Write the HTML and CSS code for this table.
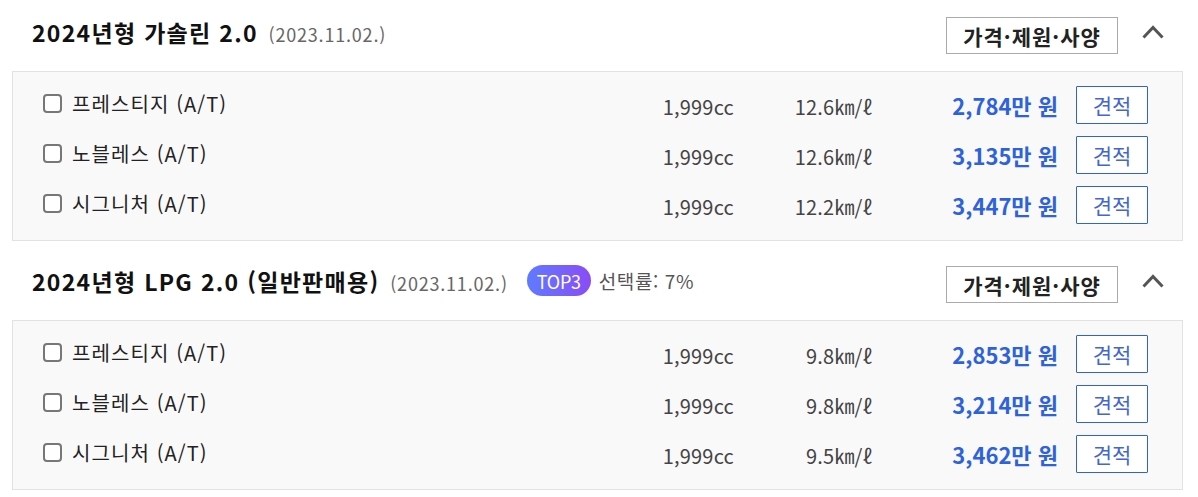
FILE: index.html
```html
<!DOCTYPE html>
<html lang="ko">
<head>
<meta charset="utf-8">
<link rel="stylesheet" href="styles.css">
</head>
<body>
<div class="wrap">
  <section class="trim">
    <div class="trim-head">
      <h2 class="title">2024년형 가솔린 2.0 <span class="date">(2023.11.02.)</span></h2>
      <div class="head-right">
        <button class="spec-btn">가격·제원·사양</button>
        <span class="chev"><svg width="22" height="14" viewBox="0 0 22 14"><path d="M1.5 12.5 L11 2.5 L20.5 12.5" fill="none" stroke="#555" stroke-width="3"/></svg></span>
      </div>
    </div>
    <div class="panel">
      <div class="row"><label class="name"><span class="cb"></span>프레스티지 (A/T)</label><span class="cc">1,999cc</span><span class="fuel">12.6㎞/ℓ</span><span class="price"><b>2,784</b>만 원</span><button class="est">견적</button></div>
      <div class="row"><label class="name"><span class="cb"></span>노블레스 (A/T)</label><span class="cc">1,999cc</span><span class="fuel">12.6㎞/ℓ</span><span class="price"><b>3,135</b>만 원</span><button class="est">견적</button></div>
      <div class="row"><label class="name"><span class="cb"></span>시그니처 (A/T)</label><span class="cc">1,999cc</span><span class="fuel">12.2㎞/ℓ</span><span class="price"><b>3,447</b>만 원</span><button class="est">견적</button></div>
    </div>
  </section>
  <section class="trim">
    <div class="trim-head">
      <h2 class="title">2024년형 LPG 2.0 (일반판매용) <span class="date">(2023.11.02.)</span></h2>
      <span class="badge">TOP3</span><span class="rate">선택률: 7%</span>
      <div class="head-right">
        <button class="spec-btn">가격·제원·사양</button>
        <span class="chev"><svg width="22" height="14" viewBox="0 0 22 14"><path d="M1.5 12.5 L11 2.5 L20.5 12.5" fill="none" stroke="#555" stroke-width="3"/></svg></span>
      </div>
    </div>
    <div class="panel">
      <div class="row"><label class="name"><span class="cb"></span>프레스티지 (A/T)</label><span class="cc">1,999cc</span><span class="fuel">9.8㎞/ℓ</span><span class="price"><b>2,853</b>만 원</span><button class="est">견적</button></div>
      <div class="row"><label class="name"><span class="cb"></span>노블레스 (A/T)</label><span class="cc">1,999cc</span><span class="fuel">9.8㎞/ℓ</span><span class="price"><b>3,214</b>만 원</span><button class="est">견적</button></div>
      <div class="row"><label class="name"><span class="cb"></span>시그니처 (A/T)</label><span class="cc">1,999cc</span><span class="fuel">9.5㎞/ℓ</span><span class="price"><b>3,462</b>만 원</span><button class="est">견적</button></div>
    </div>
  </section>
</div>
</body>
</html>
```
FILE: styles.css
```css
* { box-sizing: border-box; }
html, body { margin: 0; padding: 0; background: #fff; }
body { font-family: "Noto Sans CJK KR", "Noto Sans", sans-serif; color: #222; }
.wrap { width: 1171px; margin-left: 12px; }
.trim + .trim { margin-top: 8px; }
.trim-head { display: flex; align-items: center; height: 71px; padding: 0 0 8px 20px; }
.title { margin: 0; font-size: 23px; font-weight: 700; color: #111; letter-spacing: 1.3px; }
.date { font-size: 18px; font-weight: 400; color: #666; letter-spacing: 0.8px; margin-left: 3px; }
.badge { display: inline-flex; align-items: center; justify-content: center; width: 64px; height: 31px; margin-left: 19px; border-radius: 16px; background: linear-gradient(90deg, #5f7bff, #8a4cf6); color: #fff; font-size: 18px; letter-spacing: -0.3px; }
.rate { margin-left: 8px; font-size: 19px; color: #555; letter-spacing: 0.6px; }
.head-right { margin-left: auto; display: flex; align-items: center; padding-right: 19px; padding-top: 8px; }
.spec-btn { width: 172px; height: 37px; border: 1px solid #aaa; background: #fff; font-family: inherit; font-size: 21px; font-weight: 700; color: #222; padding: 0; letter-spacing: 1px; }
.chev { display: flex; margin-left: 24px; margin-top: -8px; }
.panel { background: #f9f9f9; border: 1px solid #e2e2e2; padding: 8px 34px 10px 30px; }
.row { display: grid; grid-template-columns: 1fr 120px 138px 186px 90px; align-items: center; height: 50px; }
.name { display: flex; align-items: center; font-size: 20px; color: #222; letter-spacing: 1.1px; margin-top: -4px; }
.cb { width: 19px; height: 19px; border: 2px solid #777; border-radius: 4px; background: #fff; margin-right: 10px; }
.cc, .fuel { text-align: right; font-size: 20px; color: #444; margin-top: 3px; letter-spacing: 0.2px; }
.price { text-align: right; font-size: 22px; font-weight: 700; color: #2d62db; }
.price b { font-weight: 700; }
.est { justify-self: end; width: 72px; height: 38px; border: 1px solid #2e62dd; border-radius: 1px; background: #fff; font-family: inherit; font-size: 21px; color: #4566cc; padding: 0; }
```
